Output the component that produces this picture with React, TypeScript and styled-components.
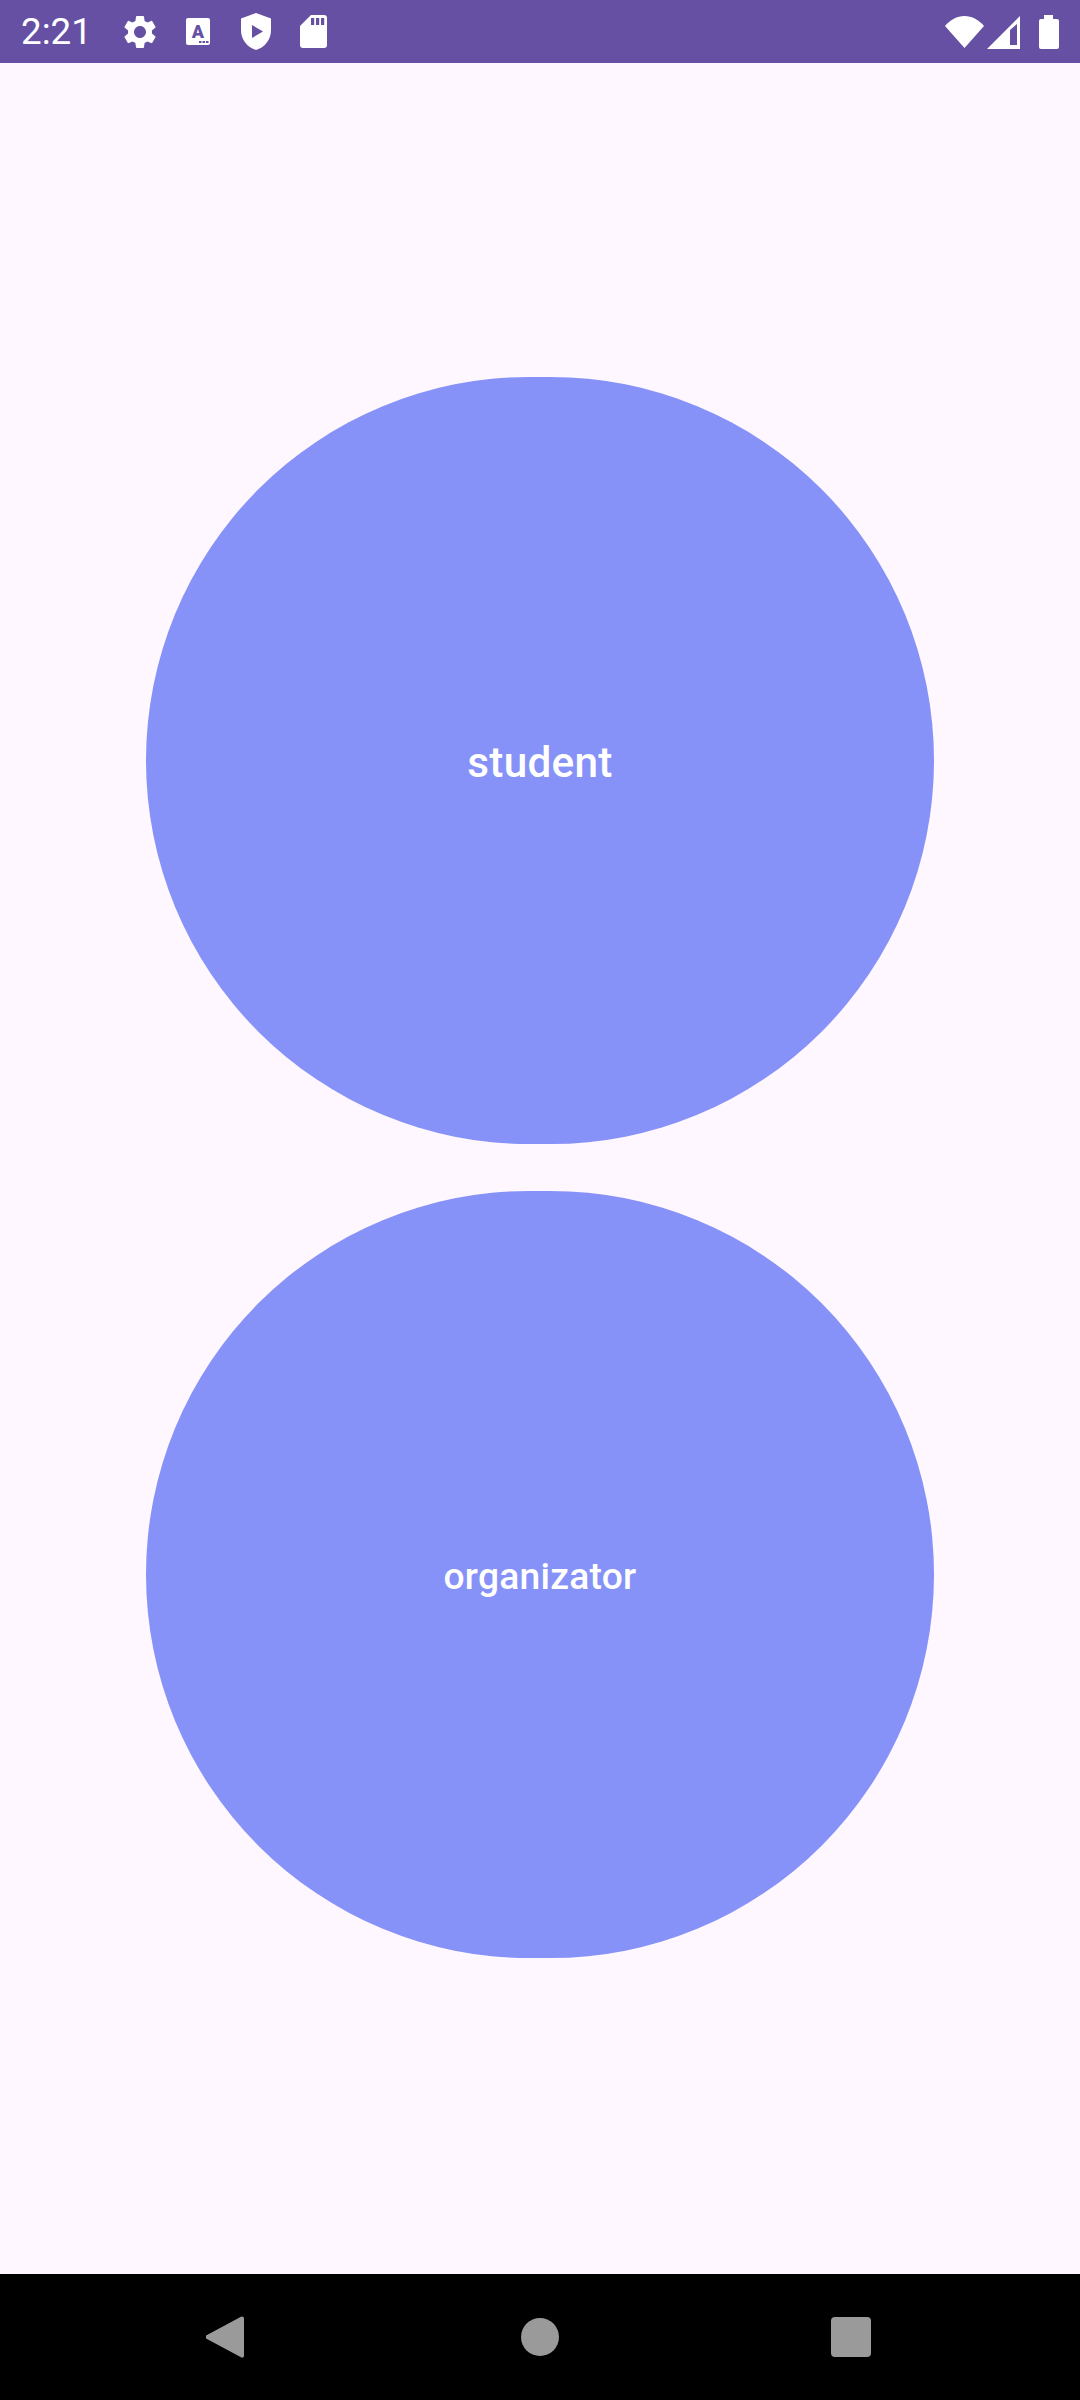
import styled, {createGlobalStyle} from 'styled-components';

const GlobalStyle = createGlobalStyle`
	html, body {
		margin: 0;
		padding: 0;
		background: #fef7ff;
	}
`;

const Screen = styled.div`
	display: flex;
	flex-direction: column;
	width: 1080px;
	height: 2400px;
	background: #fef7ff;
	font-family: Roboto, 'Liberation Sans', sans-serif;
`;

const StatusBar = styled.div`
	display: flex;
	align-items: center;
	justify-content: space-between;
	height: 63px;
	padding: 0 21px 0 21px;
	background: #6650a4;
	color: #ffffff;
`;

const StatusLeft = styled.div`
	display: flex;
	align-items: center;
`;

const Clock = styled.span`
	width: 90px;
	font-size: 36.75px;
	line-height: 63px;
`;

const NotificationIcons = styled.div`
	display: flex;
	align-items: center;
	gap: 18px;
	margin-left: 9px;
`;

const SystemIcons = styled.div`
	display: flex;
	align-items: center;
	gap: 3px;
`;

const BatteryIcon = styled.svg`
	margin-left: 16px;
`;

const Content = styled.main`
	flex: 1;
	display: flex;
	flex-direction: column;
	align-items: center;
	justify-content: center;
	gap: 47px;
	padding-bottom: 2px;
`;

const RoleButton = styled.button<{$fontSize: number}>`
	display: flex;
	align-items: center;
	justify-content: center;
	width: 788px;
	height: 767px;
	padding: 3px 0 0;
	border: none;
	border-radius: 383.5px;
	background: #8692f7;
	color: #ffffff;
	font-family: inherit;
	font-size: ${(props) => props.$fontSize}px;
	font-weight: 500;
	letter-spacing: 0.26px;
`;

const NavBar = styled.nav`
	display: flex;
	align-items: center;
	height: 126px;
	padding-left: 206px;
	background: #000000;
`;

const NavItem = styled.div<{$offset: number}>`
	display: flex;
	margin-left: ${(props) => props.$offset}px;
`;

const GearIcon = () => (
	<svg width="40" height="40" viewBox="0 0 24 24" fill="#ffffff">
		<path d="M19.14 12.94c.04-.3.06-.61.06-.94 0-.32-.02-.64-.07-.94l2.03-1.58c.18-.14.23-.41.12-.61l-1.92-3.32c-.12-.22-.37-.29-.59-.22l-2.39.96c-.5-.38-1.03-.7-1.62-.94l-.36-2.54c-.04-.24-.24-.41-.48-.41h-3.84c-.24 0-.43.17-.47.41l-.36 2.54c-.59.24-1.13.57-1.62.94l-2.39-.96c-.22-.08-.47 0-.59.22L2.74 8.87c-.12.21-.08.47.12.61l2.03 1.58c-.05.3-.09.63-.09.94s.02.64.07.94l-2.03 1.58c-.18.14-.23.41-.12.61l1.92 3.32c.12.22.37.29.59.22l2.39-.96c.5.38 1.03.7 1.62.94l.36 2.54c.05.24.24.41.48.41h3.84c.24 0 .44-.17.47-.41l.36-2.54c.59-.24 1.13-.56 1.62-.94l2.39.96c.22.08.47 0 .59-.22l1.92-3.32c.12-.22.07-.47-.12-.61l-2.01-1.58zM12 15.6c-1.98 0-3.6-1.62-3.6-3.6s1.62-3.6 3.6-3.6 3.6 1.62 3.6 3.6-1.62 3.6-3.6 3.6z" />
	</svg>
);

const KeyboardIcon = () => (
	<svg width="40" height="40" viewBox="0 0 40 40">
		<rect x="8" y="6" width="24" height="27" rx="2" fill="#ffffff" />
		<text x="20" y="26" fontFamily="Roboto, sans-serif" fontSize="18" fontWeight="900" textAnchor="middle" fill="#6650a4">
			A
		</text>
		<rect x="21" y="29" width="2.5" height="2" fill="#6650a4" />
		<rect x="24.5" y="29" width="2.5" height="2" fill="#6650a4" />
		<rect x="28" y="29" width="2.5" height="2" fill="#6650a4" />
	</svg>
);

const ShieldIcon = () => (
	<svg width="40" height="40" viewBox="0 0 40 40">
		<path d="M20 1 L35 6.5 V18 C35 28 28.5 35.5 20 38 C11.5 35.5 5 28 5 18 V6.5 Z" fill="#ffffff" />
		<path d="M16 13 L27 19.5 L16 26 Z" fill="#6650a4" />
	</svg>
);

const SdCardIcon = () => (
	<svg width="40" height="40" viewBox="0 0 40 40">
		<path d="M17 3 H30 A3 3 0 0 1 33 6 V33 A3 3 0 0 1 30 36 H9 A3 3 0 0 1 6 33 V14 Z" fill="#ffffff" />
		<rect x="17" y="6" width="3.2" height="7" fill="#6650a4" />
		<rect x="22" y="6" width="3.2" height="7" fill="#6650a4" />
		<rect x="27" y="6" width="3.2" height="7" fill="#6650a4" />
	</svg>
);

const WifiIcon = () => (
	<svg width="39" height="34" viewBox="0 0 39 34">
		<path d="M0 11 C5 5 12 1 19.5 1 C27 1 34 5 39 11 L19.5 33 Z" fill="#ffffff" />
	</svg>
);

const SignalIcon = () => (
	<svg width="33" height="34" viewBox="0 0 33 34">
		<path d="M33 1 V34 H0 Z" fill="#ffffff" />
		<path d="M23 15 L30 9 V30 H23 Z" fill="#6650a4" />
	</svg>
);

const BackIcon = () => (
	<svg width="38" height="42" viewBox="0 0 38 42">
		<path d="M36 0.5 A2 2 0 0 1 38 2 V40 A2 2 0 0 1 35.5 41.5 L1 23 A2.2 2.2 0 0 1 1 19 L35 0.7 Z" fill="#9a9a9a" />
	</svg>
);

const HomeIcon = () => (
	<svg width="38" height="40" viewBox="0 0 38 40">
		<circle cx="19" cy="20" r="19" fill="#9a9a9a" />
	</svg>
);

const RecentsIcon = () => (
	<svg width="40" height="40" viewBox="0 0 40 40">
		<rect width="40" height="40" rx="4" fill="#9a9a9a" />
	</svg>
);

const roles = [
	{label: 'student', fontSize: 42.3},
	{label: 'organizator', fontSize: 37.2},
];

const App = () => {
	return (
		<Screen>
			<GlobalStyle />
			<StatusBar>
				<StatusLeft>
					<Clock>2:21</Clock>
					<NotificationIcons>
						<GearIcon />
						<KeyboardIcon />
						<ShieldIcon />
						<SdCardIcon />
					</NotificationIcons>
				</StatusLeft>
				<SystemIcons>
					<WifiIcon />
					<SignalIcon />
					<BatteryIcon width="20" height="34" viewBox="0 0 20 34">
						<path d="M5 0 H14 V4 H18 A2 2 0 0 1 20 6 V32 A2 2 0 0 1 18 34 H2 A2 2 0 0 1 0 32 V6 A2 2 0 0 1 2 4 H5 Z" fill="#ffffff" />
					</BatteryIcon>
				</SystemIcons>
			</StatusBar>
			<Content>
				{roles.map((role) => (
					<RoleButton key={role.label} $fontSize={role.fontSize}>
						{role.label}
					</RoleButton>
				))}
			</Content>
			<NavBar>
				<NavItem $offset={0}>
					<BackIcon />
				</NavItem>
				<NavItem $offset={277}>
					<HomeIcon />
				</NavItem>
				<NavItem $offset={272}>
					<RecentsIcon />
				</NavItem>
			</NavBar>
		</Screen>
	);
};

export default App;
